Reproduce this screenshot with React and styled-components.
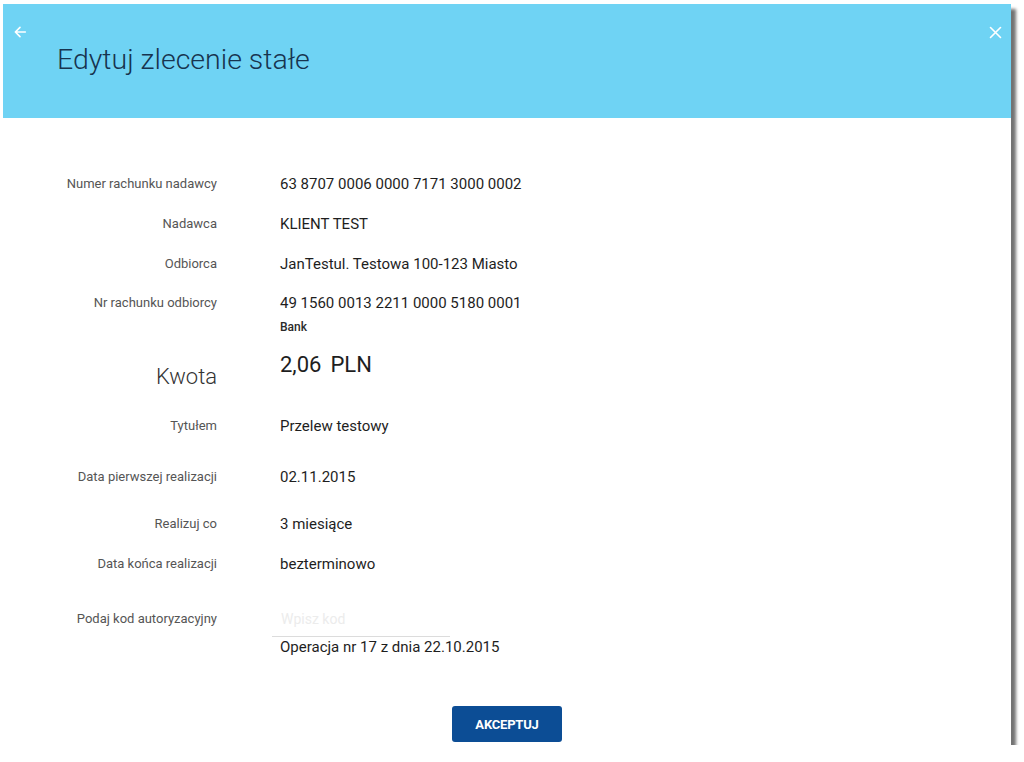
import React from 'react';
import styled, { createGlobalStyle } from 'styled-components';

const Global = createGlobalStyle`
  html, body { margin: 0; padding: 0; background: #fff; }
  body { font-family: Roboto, "Liberation Sans", sans-serif; }
`;

// --- Styled Components ---
const Dialog = styled.div`
  margin: 4px 0 0 3px;
  width: 1008px;
  height: 741px;
  background: #fff;
  box-shadow: 5px 5px 3px rgba(0, 0, 0, 0.55);
  display: flex;
  flex-direction: column;
`;

const Header = styled.div`
  position: relative;
  height: 114px;
  background: #6fd3f4;
  display: flex;
  align-items: center;
  padding-left: 54px;
  padding-bottom: 4px;
  box-sizing: border-box;
`;

const Title = styled.h1`
  margin: 0;
  font-size: 28.5px;
  font-weight: 300;
  color: #17344f;
`;

const IconButton = styled.button`
  position: absolute;
  top: 16px;
  ${(p) => (p.$right ? 'right: 4px;' : 'left: 5px;')}
  width: 24px;
  height: 24px;
  padding: 0;
  border: 0;
  background: transparent;
  display: flex;
  align-items: center;
  justify-content: center;
  cursor: pointer;
`;

const Body = styled.div`
  flex: 1;
  padding-top: 56px;
  display: flex;
  flex-direction: column;
`;

const Row = styled.div`
  display: grid;
  grid-template-columns: 214px 1fr;
  column-gap: 63px;
  align-items: start;
  margin-top: ${(p) => p.$mt || 0}px;
`;

const Label = styled.div`
  text-align: right;
  font-size: ${(p) => (p.$big ? 22 : 13)}px;
  font-weight: ${(p) => (p.$big ? 300 : 400)};
  line-height: 20px;
  color: ${(p) => (p.$big ? '#333' : '#555')};
  padding-top: ${(p) => p.$pt || 0}px;
`;

const Value = styled.div`
  font-size: ${(p) => (p.$big ? 22 : 15)}px;
  font-weight: 400;
  line-height: 20px;
  color: #1e1e1e;
`;

const Sub = styled.div`
  font-size: 12px;
  font-weight: 500;
  line-height: 16px;
  color: #2a2a2a;
  margin-top: 6px;
`;

const Amount = styled.span`
  display: inline-flex;
  gap: 9px;
`;

const CodeInput = styled.input`
  display: block;
  margin-left: -8px;
  width: 178px;
  box-sizing: border-box;
  height: 28px;
  padding: 0 0 8px 9px;
  border: 0;
  border-bottom: 1px solid #dcdcdc;
  font-family: inherit;
  font-size: 14px;
  color: #222;
  outline: none;
  &::placeholder { color: #ececec; }
`;

const Note = styled.div`
  font-size: 15px;
  line-height: 20px;
  color: #1e1e1e;
  margin-top: 0;
`;

const Footer = styled.div`
  display: flex;
  justify-content: center;
  margin-top: 49px;
`;

const Accept = styled.button`
  width: 110px;
  height: 36px;
  border: 0;
  border-radius: 3px;
  background: #0c4d95;
  color: #fff;
  font-family: inherit;
  font-size: 13px;
  font-weight: 700;
  letter-spacing: -0.2px;
  cursor: pointer;
`;

const rows = [
  { label: 'Numer rachunku nadawcy', value: '63 8707 0006 0000 7171 3000 0002', mt: 0 },
  { label: 'Nadawca', value: 'KLIENT TEST', mt: 20 },
  { label: 'Odbiorca', value: 'JanTestul. Testowa 100-123 Miasto', mt: 20 },
  { label: 'Nr rachunku odbiorcy', value: '49 1560 0013 2211 0000 5180 0001', sub: 'Bank', mt: 19 },
];

const rowsAfter = [
  { label: 'Tytułem', value: 'Przelew testowy', mt: 29 },
  { label: 'Data pierwszej realizacji', value: '02.11.2015', mt: 31 },
  { label: 'Realizuj co', value: '3 miesiące', mt: 27 },
  { label: 'Data końca realizacji', value: 'bezterminowo', mt: 20 },
];

function App() {
  return (
    <>
      <Global />
      <Dialog>
        <Header>
          <IconButton aria-label="Wstecz">
            <svg width="16" height="16" viewBox="0 0 24 24" fill="none" stroke="#fff" strokeWidth="2.4" strokeLinecap="round" strokeLinejoin="round">
              <path d="M20 12H5M12 5l-7 7 7 7" />
            </svg>
          </IconButton>
          <Title>Edytuj zlecenie stałe</Title>
          <IconButton $right aria-label="Zamknij">
            <svg width="15" height="15" viewBox="0 0 24 24" fill="none" stroke="#fff" strokeWidth="2.6" strokeLinecap="round">
              <path d="M4 4l16 16M20 4L4 20" />
            </svg>
          </IconButton>
        </Header>

        <Body>
          {rows.map((r) => (
            <Row key={r.label} $mt={r.mt}>
              <Label>{r.label}</Label>
              <div>
                <Value>{r.value}</Value>
                {r.sub && <Sub>{r.sub}</Sub>}
              </div>
            </Row>
          ))}

          <Row $mt={20}>
            <Label $big $pt={12}>Kwota</Label>
            <Value $big>
              <Amount><span>2,06</span><span>PLN</span></Amount>
            </Value>
          </Row>

          {rowsAfter.map((r) => (
            <Row key={r.label} $mt={r.mt}>
              <Label>{r.label}</Label>
              <Value>{r.value}</Value>
            </Row>
          ))}

          <Row $mt={35}>
            <Label>Podaj kod autoryzacyjny</Label>
            <div>
              <CodeInput placeholder="Wpisz kod" />
              <Note>Operacja nr 17 z dnia 22.10.2015</Note>
            </div>
          </Row>

          <Footer>
            <Accept>AKCEPTUJ</Accept>
          </Footer>
        </Body>
      </Dialog>
    </>
  );
}

export default App;
